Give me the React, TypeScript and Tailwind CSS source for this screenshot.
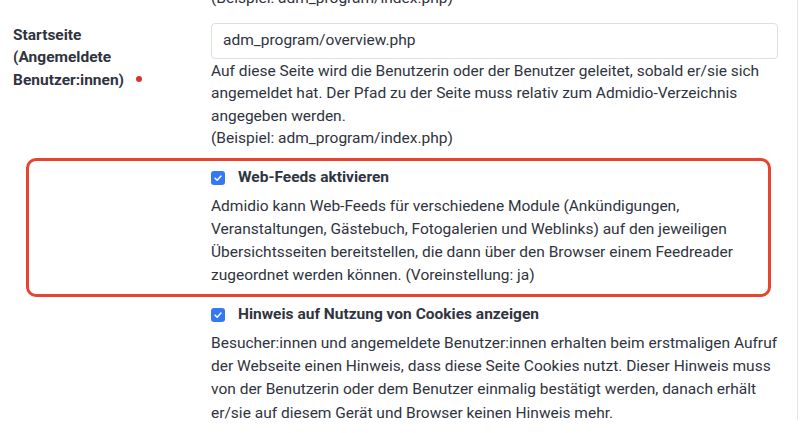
const startDesc = [
  "Auf diese Seite wird die Benutzerin oder der Benutzer geleitet, sobald er/sie sich",
  "angemeldet hat. Der Pfad zu der Seite muss relativ zum Admidio-Verzeichnis",
  "angegeben werden.",
  "(Beispiel: adm_program/index.php)",
];

const feedDesc = [
  "Admidio kann Web-Feeds für verschiedene Module (Ankündigungen,",
  "Veranstaltungen, Gästebuch, Fotogalerien und Weblinks) auf den jeweiligen",
  "Übersichtsseiten bereitstellen, die dann über den Browser einem Feedreader",
  "zugeordnet werden können. (Voreinstellung: ja)",
];

const cookieDesc = [
  "Besucher:innen und angemeldete Benutzer:innen erhalten beim erstmaligen Aufruf",
  "der Webseite einen Hinweis, dass diese Seite Cookies nutzt. Dieser Hinweis muss",
  "von der Benutzerin oder dem Benutzer einmalig bestätigt werden, danach erhält",
  "er/sie auf diesem Gerät und Browser keinen Hinweis mehr.",
];

const Lines = ({ lines, lh }: { lines: string[]; lh: string }) => (
  <div className={lh}>
    {lines.map((l, i) => (
      <div key={i} className="whitespace-nowrap">
        {l}
      </div>
    ))}
  </div>
);

const Check = () => (
  <span className="flex h-[14px] w-[14px] items-center justify-center rounded-[3px] bg-[#3478f6]">
    <svg viewBox="0 0 12 12" className="h-[10px] w-[10px]" fill="none">
      <path d="M2.5 6.2 5 8.6 9.6 3.6" stroke="white" strokeWidth="1.8" strokeLinecap="round" strokeLinejoin="round" />
    </svg>
  </span>
);

const CheckRow = ({ label, lines }: { label: string; lines: string[] }) => (
  <div>
    <div className="flex items-center gap-[13px] h-[22px]">
      <Check />
      <span className="font-bold">{label}</span>
    </div>
    <div className="mt-[6px]">
      <Lines lines={lines} lh="leading-[23.3px]" />
    </div>
  </div>
);

export default function App() {
  return (
    <div className="w-[800px] h-[433px] overflow-hidden bg-white font-['Roboto',Arial,sans-serif] text-[15.5px] text-[#2f3440]">
      <div className="w-[798px] h-full border-r border-[#e4e6ea]">
        {/* cut-off example line */}
        <div className="pl-[211px] -mt-[13px] leading-[22.5px]">(Beispiel: adm_program/index.php)</div>

        {/* Startseite */}
        <div className="flex mt-[13px]">
          <div className="w-[211px] pl-[13px] pt-[1px] font-bold leading-[22.5px]">
            Startseite
            <br />
            (Angemeldete
            <br />
            Benutzer:innen)
            <span className="ml-[12px] inline-block h-[6px] w-[6px] rounded-full bg-[#d8332c] align-[3px]" />
          </div>
          <div className="w-[567px]">
            <div className="h-[36px] rounded-[4px] border border-[#dcdfe3] pl-[11px] flex items-center">
              adm_program/overview.php
            </div>
            <div className="pt-[1px]">
              <Lines lines={startDesc} lh="leading-[22.5px]" />
            </div>
          </div>
        </div>

        {/* Web-Feeds, highlighted */}
        <div className="ml-[26px] mt-[8px] w-[745px] rounded-[10px] border-[3px] border-[#e8432d] pl-[182px] pt-[6px] pb-[6px]">
          <CheckRow label="Web-Feeds aktivieren" lines={feedDesc} />
        </div>

        {/* Cookies */}
        <div className="pl-[211px] mt-[7px]">
          <CheckRow label="Hinweis auf Nutzung von Cookies anzeigen" lines={cookieDesc} />
        </div>
      </div>
    </div>
  );
}
